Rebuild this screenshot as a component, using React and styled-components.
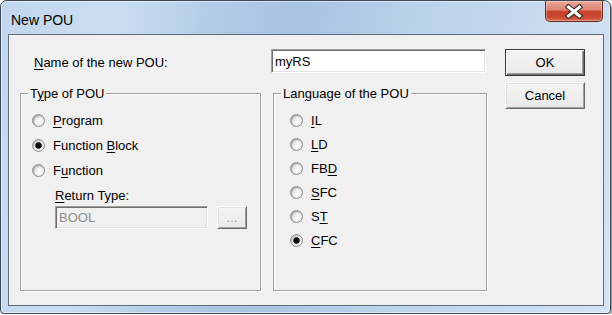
import React from "react";
import styled, { createGlobalStyle } from "styled-components";

const GlobalStyle = createGlobalStyle`
  body {
    margin: 0;
    background: #ffffff;
    font-family: "Liberation Sans", Arial, sans-serif;
  }
`;

const Window = styled.div`
  box-sizing: border-box;
  width: 611px;
  height: 314px;
  display: flex;
  flex-direction: column;
  border: 1px solid #3d4957;
  border-radius: 7px 7px 4px 4px;
  padding: 0 6px 7px 7px;
  background: linear-gradient(
    100deg,
    #c1d7ee 0%,
    #cadef1 18%,
    #b3cce7 32%,
    #a7c3e2 45%,
    #b9d1ea 62%,
    #c6daef 80%,
    #d2e3f3 100%
  );
  box-shadow: 1px 1px 1px rgba(0, 0, 0, 0.45), inset 0 0 0 1px rgba(255, 255, 255, 0.55);
`;

const TitleBar = styled.div`
  height: 33px;
  display: flex;
  justify-content: space-between;
  align-items: flex-start;
`;

const Title = styled.span`
  margin: 11px 0 0 3px;
  font-size: 14px;
  line-height: 16px;
  color: #000;
`;

const CloseButton = styled.div`
  box-sizing: border-box;
  width: 58px;
  height: 21px;
  margin: 0 1px 0 0;
  display: flex;
  align-items: center;
  justify-content: center;
  border: 1px solid #6b2b22;
  border-top: none;
  border-radius: 0 0 5px 5px;
  background: linear-gradient(
    #e9a89b 0%,
    #dc8372 45%,
    #c7432c 52%,
    #c8452e 78%,
    #dc6c52 100%
  );
  box-shadow: inset 0 0 0 1px rgba(255, 255, 255, 0.3);
`;

const Client = styled.div`
  flex: 1;
  display: flex;
  gap: 18px;
  padding: 14px 0 0 11px;
  border: 1px solid #5f6b79;
  background: #f0f0f0;
  font-size: 13px;
  color: #000;
`;

const MainColumn = styled.div`
  width: 467px;
  display: flex;
  flex-direction: column;
`;

const TopRow = styled.div`
  display: flex;
  align-items: center;
  height: 24px;
`;

const Label = styled.span`
  width: ${(p) => p.$width || "auto"};
  box-sizing: border-box;
  padding-left: ${(p) => p.$indent || 0}px;
  padding-top: 3px;
  line-height: 15px;
  white-space: nowrap;
`;

const TextBox = styled.div`
  box-sizing: border-box;
  width: ${(p) => p.$width}px;
  height: ${(p) => p.$height}px;
  padding: 0 3px;
  display: flex;
  align-items: center;
  border: 1px solid;
  border-color: #a0a0a0 #ffffff #ffffff #a0a0a0;
  box-shadow: inset 1px 1px 0 #6d6d6d, inset -1px -1px 0 #e3e3e3;
  background: ${(p) => (p.$disabled ? "#f0f0f0" : "#ffffff")};
  color: ${(p) => (p.$disabled ? "#8d8d8d" : "#000")};
  line-height: 15px;
`;

const Groups = styled.div`
  display: flex;
  gap: 12px;
  height: 198px;
  margin-top: 20px;
`;

const Group = styled.div`
  position: relative;
  box-sizing: border-box;
  width: ${(p) => p.$width}px;
  padding: ${(p) => p.$top}px 0 0 ${(p) => p.$left}px;
  border: 1px solid #a0a0a0;
  box-shadow: inset 1px 1px 0 #ffffff, 1px 1px 0 #ffffff;
`;

const Legend = styled.span`
  position: absolute;
  top: -8px;
  left: 7px;
  padding: 0 2px;
  line-height: 15px;
  background: #f0f0f0;
`;

const RadioRow = styled.div`
  display: flex;
  align-items: center;
  gap: 8px;
  height: ${(p) => p.$height}px;
`;

const RadioCircle = styled.span`
  box-sizing: border-box;
  width: 13px;
  height: 13px;
  border-radius: 50%;
  border: 1px solid #8b8c8d;
  background: ${(p) =>
    p.$checked
      ? "radial-gradient(circle, #000 0, #111 2.8px, #d8d8d8 3.6px, #f2f2f2 5px)"
      : "radial-gradient(circle at 60% 60%, #ffffff 0, #f4f4f4 3px, #d6d6d6 6px)"};
  box-shadow: inset 1px 1px 1px rgba(0, 0, 0, 0.2);
`;

const Key = styled.u`
  text-decoration: underline;
  text-underline-offset: 2px;
`;

const SubBlock = styled.div`
  padding-left: 23px;
  margin-top: 5px;
`;

const SubRow = styled.div`
  display: flex;
  gap: 9px;
  margin-top: 3px;
`;

const ButtonColumn = styled.div`
  width: 80px;
  display: flex;
  flex-direction: column;
  gap: 6px;
`;

const Button = styled.div`
  box-sizing: border-box;
  width: ${(p) => p.$width || 80}px;
  height: ${(p) => p.$height || 27}px;
  display: flex;
  align-items: center;
  justify-content: center;
  border: 1px solid;
  border-color: ${(p) =>
    p.$default ? "#3a3a3a" : "#ffffff #6a6a6a #6a6a6a #ffffff"};
  box-shadow: ${(p) =>
    p.$default
      ? "inset 1px 1px 0 #ffffff, inset -1px -1px 0 #6a6a6a, inset -2px -2px 0 #a0a0a0"
      : "inset 1px 1px 0 #e3e3e3, inset -1px -1px 0 #a0a0a0"};
  background: linear-gradient(#f4f4f4, #e9e9e9);
  color: ${(p) => (p.$disabled ? "#a0a0a0" : "#000")};
  line-height: 15px;
`;

function Radio({ label, checked, height }) {
  return (
    <RadioRow $height={height}>
      <RadioCircle $checked={checked} />
      <span>{label}</span>
    </RadioRow>
  );
}

function CloseIcon() {
  return (
    <svg width="18" height="15" viewBox="0 0 18 15">
      <path d="M3.5 3 L14.5 12 M14.5 3 L3.5 12" stroke="#3b2a28" strokeWidth="5.2" strokeLinecap="square" fill="none" />
      <path d="M3.5 3 L14.5 12 M14.5 3 L3.5 12" stroke="#ffffff" strokeWidth="3" strokeLinecap="square" fill="none" />
    </svg>
  );
}

export default function App() {
  return (
    <>
      <GlobalStyle />
      <Window>
        <TitleBar>
          <Title>New POU</Title>
          <CloseButton>
            <CloseIcon />
          </CloseButton>
        </TitleBar>
        <Client>
          <MainColumn>
            <TopRow>
              <Label $width="251px" $indent={14}>
                <Key>N</Key>ame of the new POU:
              </Label>
              <TextBox $width={215} $height={24}>myRS</TextBox>
            </TopRow>
            <Groups>
              <Group $width={241} $top={14} $left={11}>
                <Legend>
                  T<Key>y</Key>pe of POU
                </Legend>
                <Radio height={25} label={<><Key>P</Key>rogram</>} />
                <Radio height={25} checked label={<>Function <Key>B</Key>lock</>} />
                <Radio height={25} label={<>F<Key>u</Key>nction</>} />
                <SubBlock>
                  <Label>
                    <Key>R</Key>eturn Type:
                  </Label>
                  <SubRow>
                    <TextBox $width={153} $height={23} $disabled>BOOL</TextBox>
                    <Button $width={30} $height={23} $disabled>...</Button>
                  </SubRow>
                </SubBlock>
              </Group>
              <Group $width={214} $top={14} $left={16}>
                <Legend>
                  Lan<Key>g</Key>uage of the POU
                </Legend>
                <Radio height={24} label={<><Key>I</Key>L</>} />
                <Radio height={24} label={<><Key>L</Key>D</>} />
                <Radio height={24} label={<>FB<Key>D</Key></>} />
                <Radio height={24} label={<><Key>S</Key>FC</>} />
                <Radio height={24} label={<>S<Key>T</Key></>} />
                <Radio height={24} checked label={<><Key>C</Key>FC</>} />
              </Group>
            </Groups>
          </MainColumn>
          <ButtonColumn>
            <Button $default>OK</Button>
            <Button>Cancel</Button>
          </ButtonColumn>
        </Client>
      </Window>
    </>
  );
}
